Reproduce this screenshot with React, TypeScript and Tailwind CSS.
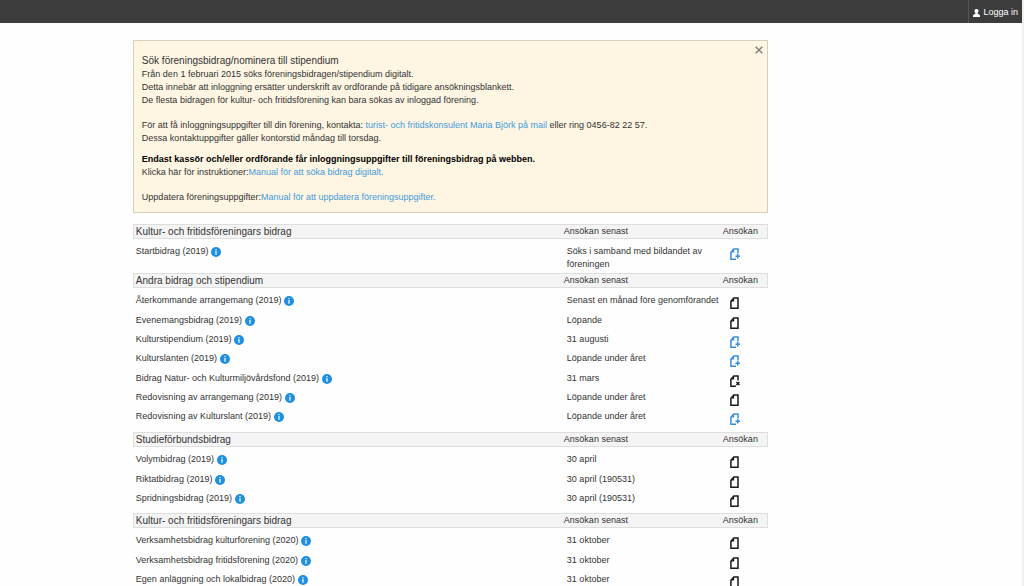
import React from 'react';

type Status = 'closed' | 'add' | 'expired';

interface Grant {
  name: string;
  deadline: string;
  status: Status;
}

interface Section {
  title: string;
  grants: Grant[];
}

const sections: Section[] = [
  {
    title: 'Kultur- och fritidsföreningars bidrag',
    grants: [
      { name: 'Startbidrag (2019)', deadline: 'Söks i samband med bildandet av föreningen', status: 'add' },
    ],
  },
  {
    title: 'Andra bidrag och stipendium',
    grants: [
      { name: 'Återkommande arrangemang (2019)', deadline: 'Senast en månad före genomförandet', status: 'closed' },
      { name: 'Evenemangsbidrag (2019)', deadline: 'Löpande', status: 'closed' },
      { name: 'Kulturstipendium (2019)', deadline: '31 augusti', status: 'add' },
      { name: 'Kulturslanten (2019)', deadline: 'Löpande under året', status: 'add' },
      { name: 'Bidrag Natur- och Kulturmiljövårdsfond (2019)', deadline: '31 mars', status: 'expired' },
      { name: 'Redovisning av arrangemang (2019)', deadline: 'Löpande under året', status: 'closed' },
      { name: 'Redovisning av Kulturslant (2019)', deadline: 'Löpande under året', status: 'add' },
    ],
  },
  {
    title: 'Studieförbundsbidrag',
    grants: [
      { name: 'Volymbidrag (2019)', deadline: '30 april', status: 'closed' },
      { name: 'Riktatbidrag (2019)', deadline: '30 april (190531)', status: 'closed' },
      { name: 'Spridningsbidrag (2019)', deadline: '30 april (190531)', status: 'closed' },
    ],
  },
  {
    title: 'Kultur- och fritidsföreningars bidrag',
    grants: [
      { name: 'Verksamhetsbidrag kulturförening (2020)', deadline: '31 oktober', status: 'closed' },
      { name: 'Verksamhetsbidrag fritidsförening (2020)', deadline: '31 oktober', status: 'closed' },
      { name: 'Egen anläggning och lokalbidrag (2020)', deadline: '31 oktober', status: 'closed' },
    ],
  },
];

const UserIcon = () => (
  <svg viewBox="0 0 7 8" className="h-2 w-[7px] fill-white" aria-hidden="true">
    <path d="M3.5 0C4.9 0 5.6.9 5.5 2.1 5.4 3 5 3.7 4.6 4.1v.7l1.5.6c.6.3.9.8.9 1.6v1H0V7c0-.8.3-1.3.9-1.6l1.5-.6v-.7C2 3.7 1.6 3 1.5 2.1 1.4.9 2.1 0 3.5 0z" />
  </svg>
);

const InfoIcon = () => (
  <svg viewBox="0 0 10 10" className="h-[10px] w-[10px]" aria-hidden="true">
    <circle cx="5" cy="5" r="5" fill="#1f8fe0" />
    <path d="M4.4 2h1.2v1.3H4.4zM4.4 4.1h1.2v3.7H4.4z" fill="#fff" />
  </svg>
);

const FileIcon = ({ status }: { status: Status }) => {
  const marked = status === 'add' || status === 'expired';
  const color = status === 'add' ? '#3b8ede' : '#1c1a14';

  return (
    <svg viewBox="0 0 11 12" className="h-3 w-[11px]" fill="none" stroke={color} aria-hidden="true">
      <path
        d={marked ? 'M8 5.5V.9H3.8L.9 4.2v7H6' : 'M3.8.9H8v10.3H.9v-7z'}
        strokeWidth="1.5"
      />
      <path d="M.9 4.6h3.2V.9z" fill={color} stroke="none" />
      {status === 'add' && <path d="M5.4 8.2h4.6M7.7 6v4.4" strokeWidth="1.5" />}
      {status === 'expired' && <path d="M6.4 7l3 3M9.4 7l-3 3" strokeWidth="1.5" />}
    </svg>
  );
};

const Notice = () => (
  <section className="relative border border-[#d9cfb8] bg-[#fef5e3] px-2 pt-3 pb-2 leading-[13px]">
    <button type="button" aria-label="Stäng" className="absolute top-[5px] right-1 p-0">
      <svg viewBox="0 0 8 8" className="h-2 w-2" stroke="#858077" strokeWidth="1.5" aria-hidden="true">
        <path d="M.7.7l6.6 6.6M7.3.7L.7 7.3" />
      </svg>
    </button>
    <h1 className="text-[10px] leading-[15px]">Sök föreningsbidrag/nominera till stipendium</h1>
    <p>
      Från den 1 februari 2015 söks föreningsbidragen/stipendium digitalt.
      <br />
      Detta innebär att inloggning ersätter underskrift av ordförande på tidigare ansökningsblankett.
      <br />
      De flesta bidragen för kultur- och fritidsförening kan bara sökas av inloggad förening.
    </p>
    <p className="mt-3">
      För att få inloggningsuppgifter till din förening, kontakta:{' '}
      <a href="#kontakt" className="text-[#459bdc]">turist- och fritidskonsulent Maria Björk på mail</a> eller ring 0456-82 22 57.
      <br />
      Dessa kontaktuppgifter gäller kontorstid måndag till torsdag.
    </p>
    <p className="mt-2">
      <strong className="text-black">
        Endast kassör och/eller ordförande får inloggningsuppgifter till föreningsbidrag på webben.
      </strong>
      <br />
      Klicka här för instruktioner:
      <a href="#manual-bidrag" className="text-[#459bdc]">Manual för att söka bidrag digitalt.</a>
    </p>
    <p className="mt-3">
      Uppdatera föreningsuppgifter:
      <a href="#manual-uppgifter" className="text-[#459bdc]">Manual för att uppdatera föreningsuppgifter.</a>
    </p>
  </section>
);

const GrantRow = ({ grant }: { grant: Grant }) => (
  <tr className="h-[19px] align-top nth-[3n]:h-5">
    <td className="pt-[3px] pl-[3px]">
      <span className="flex items-center gap-[3px]">
        {grant.name}
        <button type="button" aria-label={`Information om ${grant.name}`}>
          <InfoIcon />
        </button>
      </span>
    </td>
    <td className="pt-[3px] pb-[2px] pl-1">{grant.deadline}</td>
    <td className="pt-[6px] pl-[7px]">
      <button type="button" aria-label={`Ansök om ${grant.name}`} className="block">
        <FileIcon status={grant.status} />
      </button>
    </td>
  </tr>
);

const GrantTable = () => (
  <table className="mt-[11px] w-full table-fixed border-separate border-spacing-0 text-left leading-[13px]">
    <colgroup>
      <col />
      <col className="w-[160px]" />
      <col className="w-[45px]" />
    </colgroup>
    {sections.map((section, i) => (
      <tbody key={i}>
        <tr className="bg-[#f4f4f4] align-top">
          <th className="border-y border-l border-[#dedede] pl-[2px] text-[10px] font-normal">{section.title}</th>
          <th className="border-y border-[#dedede] pl-px font-normal">Ansökan senast</th>
          <th className="border-y border-r border-[#dedede] font-normal">Ansökan</th>
        </tr>
        <tr className="h-[3px]" aria-hidden="true" />
        {section.grants.map((grant) => (
          <GrantRow key={grant.name} grant={grant} />
        ))}
        {section.grants.length > 1 && <tr className="h-[5px]" aria-hidden="true" />}
      </tbody>
    ))}
  </table>
);

export default function App() {
  return (
    <div className="h-screen overflow-hidden border-r-2 border-[#f1f1f1] bg-[#fefefe] font-['Liberation_Sans',Arial,sans-serif] text-[9px] text-[#333]">
      <header className="flex h-[23px] justify-end bg-[#3c3c3c]">
        <a href="#logga-in" className="flex items-center gap-[3px] border-l border-[#555] px-1 pt-[2px] text-white">
          <UserIcon />
          Logga in
        </a>
      </header>
      <main className="mt-[17px] ml-[13%] max-w-[635px]">
        <Notice />
        <GrantTable />
      </main>
    </div>
  );
}
